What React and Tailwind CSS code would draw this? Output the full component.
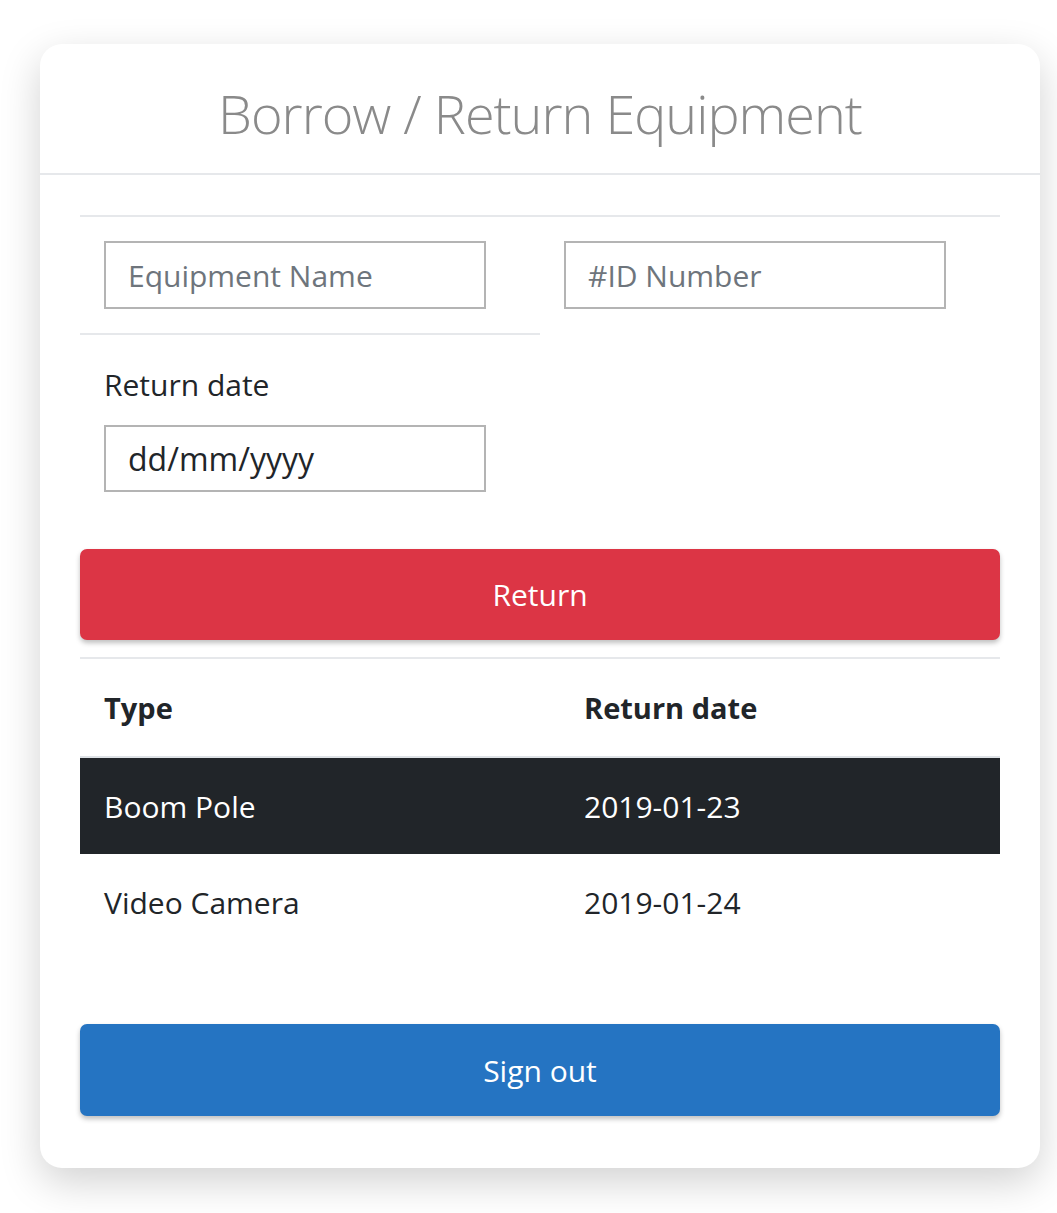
import { useState } from "react";

const rows = [
    { type: "Boom Pole", date: "2019-01-23", dark: true },
    { type: "Video Camera", date: "2019-01-24", dark: false },
];

const App = () => {
    const [name, setName] = useState("");
    const [id, setId] = useState("");

    return (
        <div className="min-h-[1213px] bg-white pt-[44px] px-[40px] font-['Open_Sans','Noto_Sans',sans-serif] text-[#212529]">
            <div className="w-[1000px] rounded-[22px] bg-white shadow-[0_14px_40px_rgba(0,0,0,0.18)] pb-[52px]">
                {/* header */}
                <div className="flex h-[131px] items-center justify-center border-b-2 border-[#e6e8eb] pt-[10px]">
                    <h2 className="text-[54px] font-light tracking-[-1px] text-[#8a8a8a]">
                        Borrow / Return Equipment
                    </h2>
                </div>

                <div className="px-[40px] pt-[40px]">
                    {/* form */}
                    <div className="border-t-2 border-[#e6e8eb]">
                        <div className="grid grid-cols-2">
                            <div className="border-b-2 border-[#e6e8eb] px-[24px] pt-[24px] pb-[24px]">
                                <input
                                    value={name}
                                    onChange={(e) => setName(e.target.value)}
                                    placeholder="Equipment Name"
                                    className="h-[68px] w-[382px] border-2 border-[#b4b4b4] px-[22px] text-[30px] text-[#212529] placeholder:text-[#6e757c] outline-none"
                                />
                            </div>
                            <div className="px-[24px] pt-[24px]">
                                <input
                                    value={id}
                                    onChange={(e) => setId(e.target.value)}
                                    placeholder="#ID Number"
                                    className="h-[68px] w-[382px] border-2 border-[#b4b4b4] px-[22px] text-[30px] text-[#212529] placeholder:text-[#6e757c] outline-none"
                                />
                            </div>
                        </div>
                        <div className="px-[24px] pt-[28px]">
                            <label className="block text-[30px] leading-[44px]">Return date</label>
                            <div className="mt-[18px] flex h-[67px] w-[382px] items-center border-2 border-[#b4b4b4] px-[22px] text-[32px]">
                                dd/mm/yyyy
                            </div>
                        </div>
                    </div>

                    <button className="mt-[57px] h-[91px] w-full rounded-[7px] bg-[#dc3545] text-[30px] text-white shadow-[0_3px_5px_rgba(0,0,0,0.25)]">
                        Return
                    </button>

                    {/* table */}
                    <div className="mt-[17px] border-t-2 border-[#e6e8eb]">
                        <div className="grid h-[99px] grid-cols-[480px_1fr] items-center border-b-2 border-[#dee2e6] text-[29px] font-bold">
                            <div className="pl-[24px]">Type</div>
                            <div className="pl-[24px]">Return date</div>
                        </div>
                        {rows.map((r) => (
                            <div
                                key={r.type}
                                className={
                                    r.dark
                                        ? "grid h-[96px] grid-cols-[480px_1fr] items-center bg-[#212529] text-[30px] text-white"
                                        : "grid h-[96px] grid-cols-[480px_1fr] items-center text-[30px] text-[#212529]"
                                }
                            >
                                <div className="pl-[24px]">{r.type}</div>
                                <div className="pl-[24px]">{r.date}</div>
                            </div>
                        ))}
                    </div>

                    <button className="mt-[74px] h-[92px] w-full rounded-[7px] bg-[#2574c2] text-[30px] text-white shadow-[0_3px_5px_rgba(0,0,0,0.25)]">
                        Sign out
                    </button>
                </div>
            </div>
        </div>
    );
};

export default App;
